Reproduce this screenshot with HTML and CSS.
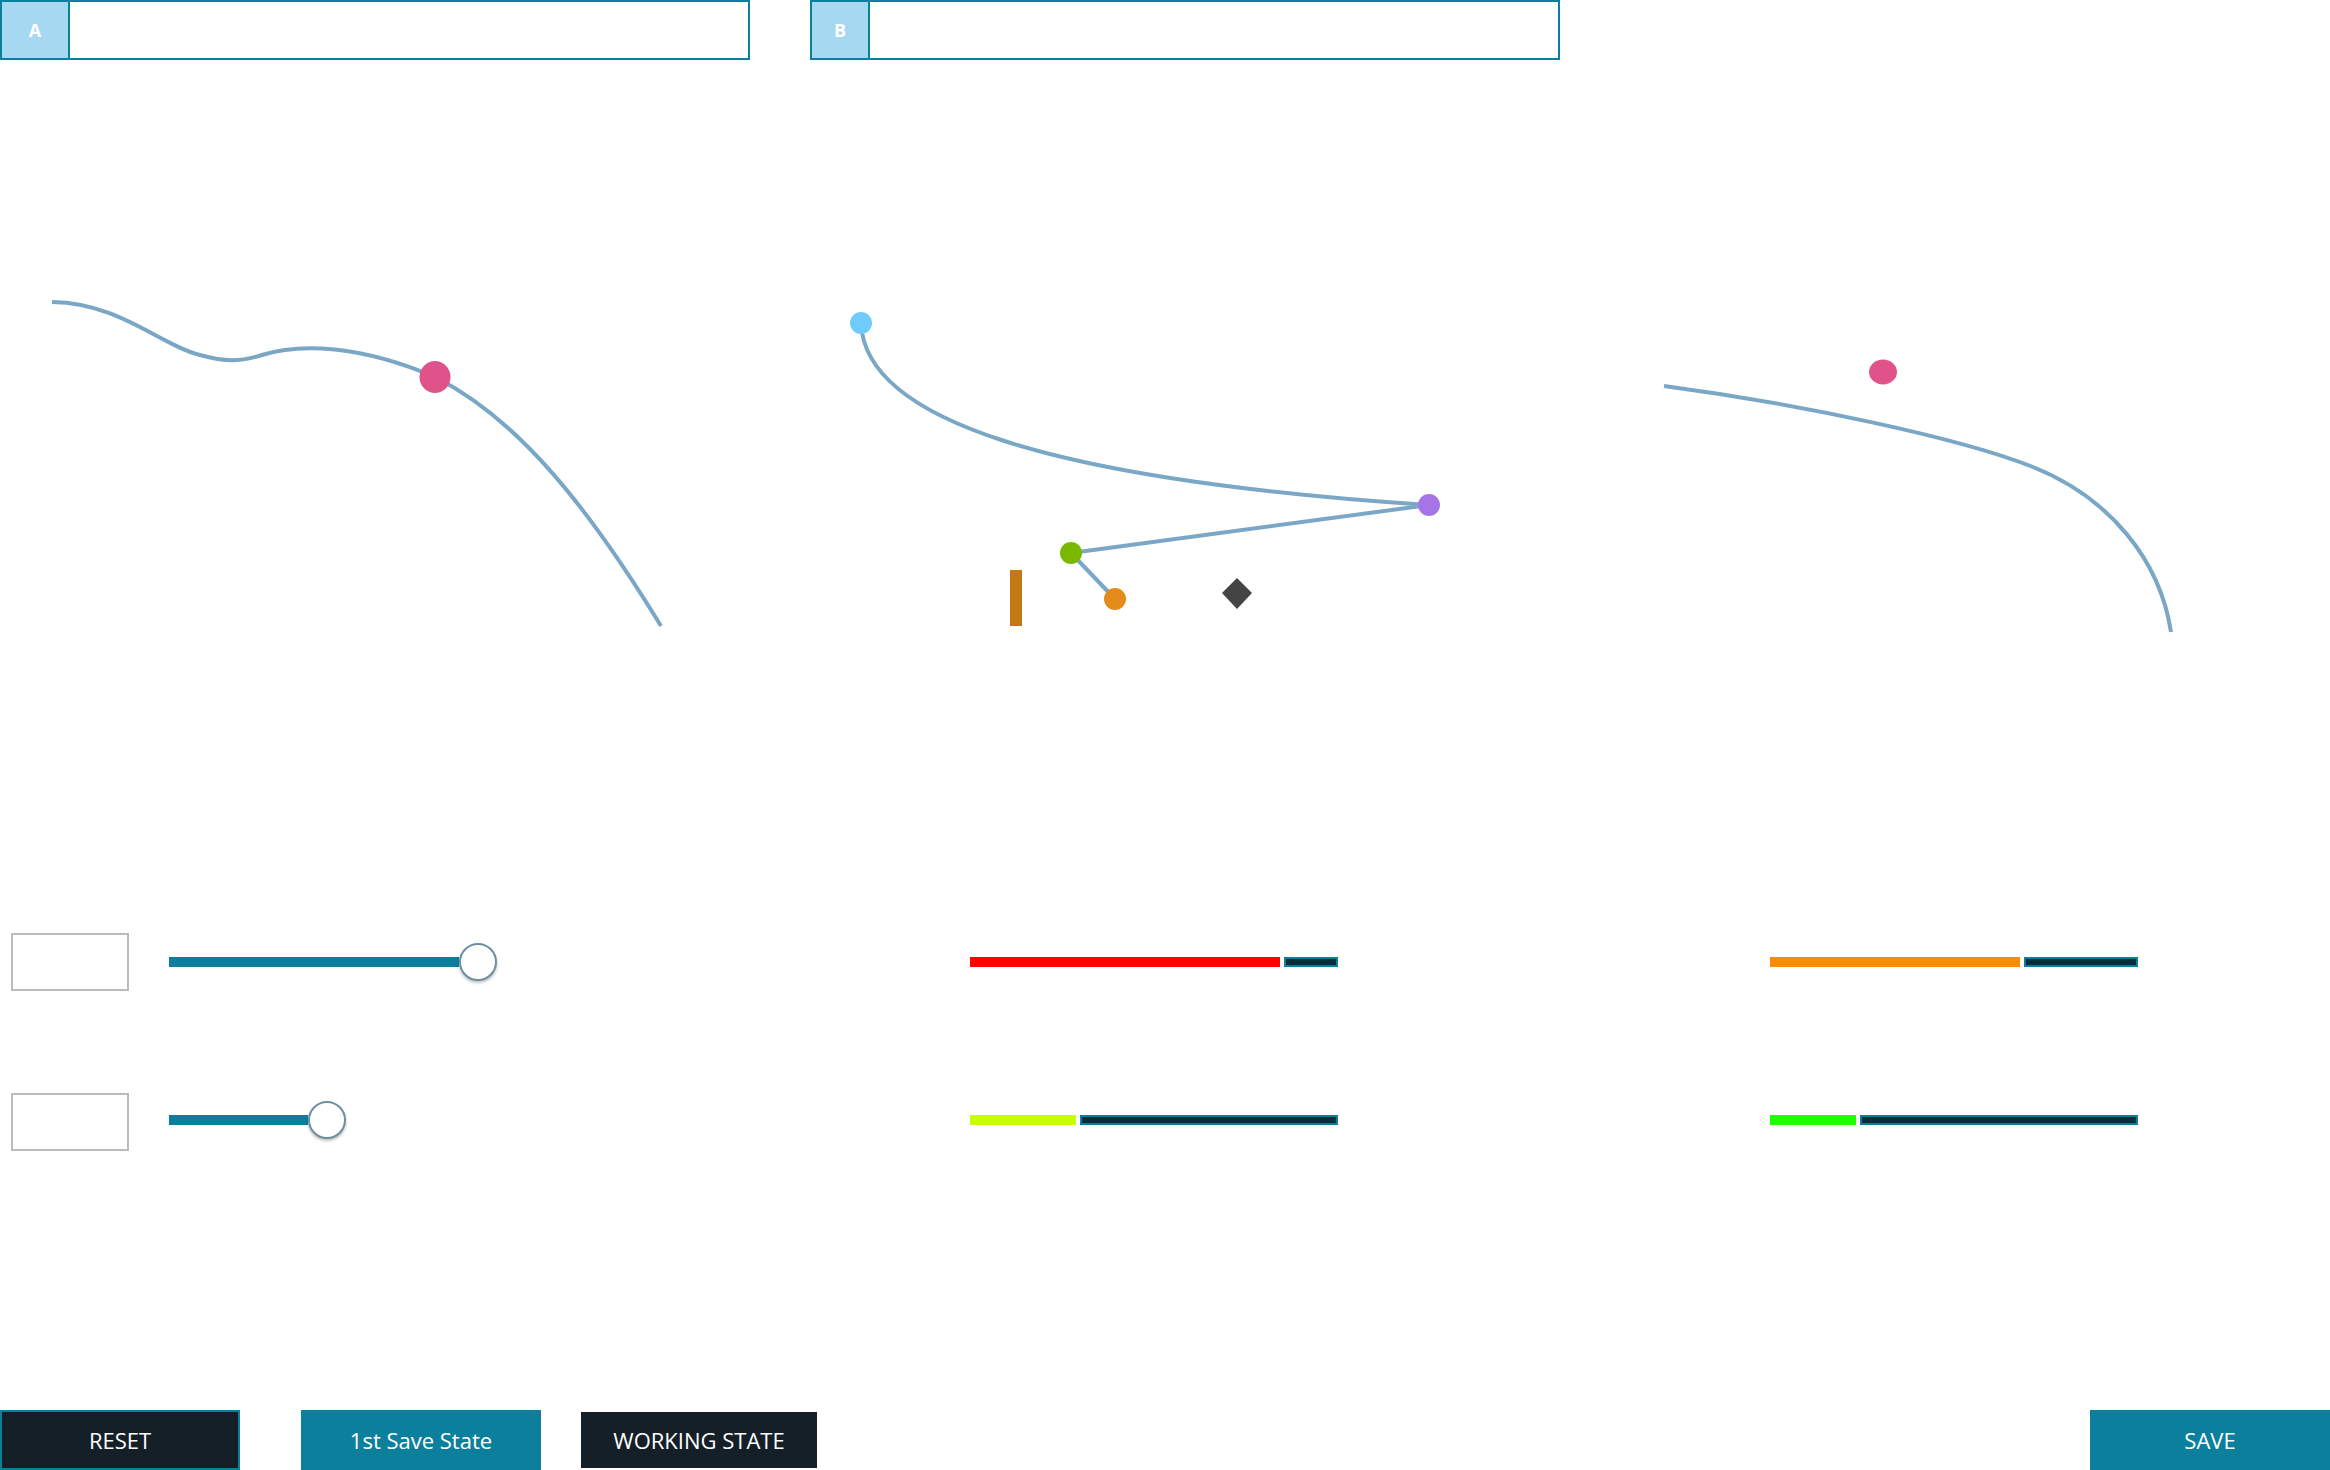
FILE: index.html
```html
<!DOCTYPE html>
<html lang="en">
<head>
<meta charset="utf-8">
<title>State editor</title>
<link rel="stylesheet" href="styles.css">
</head>
<body>
<div class="page">
  <header class="tabs">
    <div class="tab">
      <div class="tab-label tab-label-a">A</div>
      <div class="tab-field"></div>
    </div>
    <div class="tab">
      <div class="tab-label tab-label-b">B</div>
      <div class="tab-field"></div>
    </div>
  </header>

  <svg class="stage" width="2330" height="873" viewBox="0 60 2330 873" xmlns="http://www.w3.org/2000/svg">
    <g class="links" fill="none" stroke="#7aa7c5" stroke-width="4" stroke-linecap="butt">
      <path d="M52,302 C120,303 160,345 200,355 C225,362 240,362 262,355 C300,343 360,345 435,377 C520,420 590,510 661,626"/>
      <path d="M861,323 C865,420 1050,480 1429,505"/>
      <path d="M1429,505 L1071,553"/>
      <path d="M1071,553 L1115,599"/>
      <path d="M1664,386 C1800,404 1960,438 2033,467 C2110,498 2160,560 2171,632"/>
    </g>
    <ellipse cx="435" cy="377" rx="15.5" ry="16" fill="#e0528a"/>
    <ellipse cx="861" cy="323" rx="11" ry="11" fill="#6ecbfb"/>
    <ellipse cx="1429" cy="505" rx="11" ry="11" fill="#a774e8"/>
    <ellipse cx="1071" cy="553" rx="11" ry="11" fill="#7ab800"/>
    <ellipse cx="1115" cy="599" rx="11" ry="11" fill="#e38b1b"/>
    <rect x="1010" y="570" width="12" height="56" fill="#c47812"/>
    <polygon points="1237,578 1252,593 1237,609 1222,593" fill="#444444"/>
    <ellipse cx="1883" cy="372" rx="14" ry="12.5" fill="#e0528a"/>
  </svg>

  <section class="controls">
    <div class="row">
      <div class="cell cell-input">
        <div class="num-box"></div>
        <div class="slider">
          <div class="slider-fill" style="width:290px"></div>
          <div class="slider-thumb"></div>
        </div>
      </div>
      <div class="cell">
        <div class="meter">
          <div class="meter-value" style="width:310px;background:#ff0000"></div>
          <div class="meter-rest"></div>
        </div>
      </div>
      <div class="cell"></div>
      <div class="cell">
        <div class="meter">
          <div class="meter-value" style="width:250px;background:#ff8c00"></div>
          <div class="meter-rest"></div>
        </div>
      </div>
    </div>
    <div class="row row-second">
      <div class="cell cell-input">
        <div class="num-box"></div>
        <div class="slider">
          <div class="slider-fill" style="width:139px"></div>
          <div class="slider-thumb"></div>
        </div>
      </div>
      <div class="cell">
        <div class="meter">
          <div class="meter-value" style="width:106px;background:#c6ff00"></div>
          <div class="meter-rest"></div>
        </div>
      </div>
      <div class="cell"></div>
      <div class="cell">
        <div class="meter">
          <div class="meter-value" style="width:86px;background:#1eff00"></div>
          <div class="meter-rest"></div>
        </div>
      </div>
    </div>
  </section>

  <footer class="actions">
    <div class="action-group">
      <button class="btn btn-dark btn-reset">RESET</button>
      <button class="btn btn-teal btn-first">1st Save State</button>
      <button class="btn btn-dark btn-working">WORKING STATE</button>
    </div>
    <button class="btn btn-teal btn-save">SAVE</button>
  </footer>
</div>
</body>
</html>
```

FILE: styles.css
```css
* {
  box-sizing: border-box;
}

html, body {
  margin: 0;
  padding: 0;
  background: #ffffff;
}

body {
  font-family: "Open Sans", "Noto Sans", "Liberation Sans", sans-serif;
}

.page {
  width: 2330px;
  height: 1470px;
  display: flex;
  flex-direction: column;
  overflow: hidden;
}

/* Header tabs */
.tabs {
  display: flex;
  gap: 60px;
  height: 60px;
  flex: none;
}

.tab {
  width: 750px;
  height: 60px;
  display: flex;
  border: 2px solid #0b7f9b;
  background: #ffffff;
}

.tab-label {
  display: flex;
  align-items: center;
  justify-content: center;
  background: #a6d8f2;
  border-right: 2px solid #0b7f9b;
  color: #ffffff;
  font-weight: 700;
  font-size: 18px;
  height: 100%;
}

.tab-label-a {
  width: 68px;
}

.tab-label-b {
  width: 58px;
}

.tab-field {
  flex: 1;
}

/* Drawing stage */
.stage {
  display: block;
  flex: none;
}

/* Controls */
.controls {
  display: flex;
  flex-direction: column;
  gap: 102px;
  flex: none;
}

.row {
  display: grid;
  grid-template-columns: 970px 368px 432px 368px;
  height: 58px;
  align-items: center;
}

.row-second .slider,
.row-second .meter {
  margin-bottom: 5px;
}

.cell {
  display: flex;
  align-items: center;
  height: 100%;
}

.cell-input {
  padding-left: 11px;
}

.num-box {
  width: 118px;
  height: 58px;
  border: 2px solid #bbbbbb;
  background: #ffffff;
}

.slider {
  display: flex;
  align-items: center;
  margin-left: 40px;
}

.slider-fill {
  height: 10px;
  background: #0b7f9b;
}

.slider-thumb {
  width: 38px;
  height: 38px;
  border-radius: 50%;
  background: #ffffff;
  border: 2px solid #6f8fa1;
  box-shadow: 0 2px 3px rgba(0, 0, 0, 0.25);
}

.meter {
  display: flex;
  gap: 4px;
  width: 368px;
  height: 10px;
}

.meter-value {
  height: 10px;
}

.meter-rest {
  flex: 1;
  height: 10px;
  background: #062d3a;
  border: 2px solid #0b7f9b;
}

/* Footer actions */
.actions {
  margin-top: auto;
  height: 60px;
  display: flex;
  justify-content: space-between;
  align-items: stretch;
  flex: none;
}

.action-group {
  display: flex;
}

.btn {
  width: 240px;
  height: 60px;
  border: none;
  margin: 0;
  padding: 0;
  color: #ffffff;
  font-family: "Open Sans", "Noto Sans", "Liberation Sans", sans-serif;
  font-size: 22px;
  font-weight: 400;
  cursor: pointer;
}

.btn-dark {
  background: #141f28;
}

.btn-teal {
  background: #0b7f9b;
}

.btn-reset {
  border: 2px solid #0b7f9b;
}

.btn-first {
  margin-left: 61px;
}

.btn-working {
  margin-left: 38px;
  border: 2px solid #ffffff;
}

.btn-save {
  width: 240px;
}
```
